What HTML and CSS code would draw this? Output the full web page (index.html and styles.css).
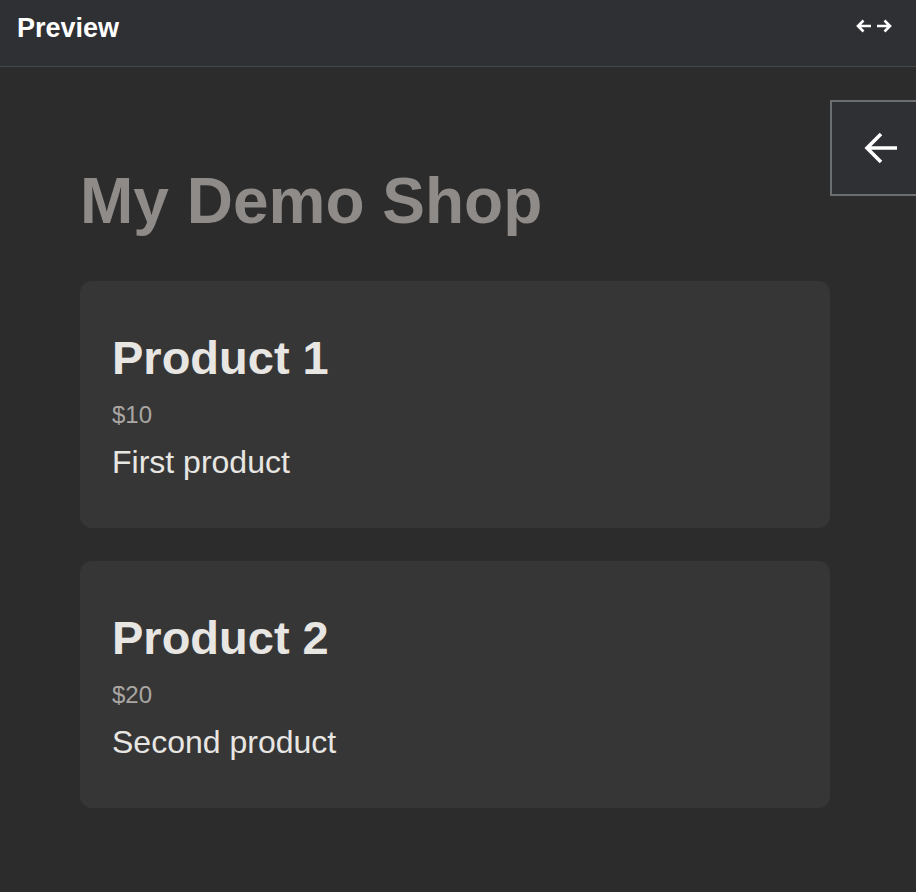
FILE: index.html
```html
<!DOCTYPE html>
<html>
<head>
<meta charset="utf-8">
<link rel="stylesheet" href="styles.css">
</head>
<body>
<header class="topbar">
  <span class="topbar-title">Preview</span>
  <svg class="resize-icon" width="36" height="14" viewBox="0 0 36 14">
    <path d="M2 7H15M7.5 1.5L2 7L7.5 12.5" fill="none" stroke="#fff" stroke-width="2.6"/>
    <path d="M21 7H34M28.5 1.5L34 7L28.5 12.5" fill="none" stroke="#fff" stroke-width="2.6"/>
  </svg>
</header>
<main class="preview">
  <button class="back-btn" aria-label="Back">
    <svg width="34" height="32" viewBox="0 0 34 32">
      <path d="M33 16H3M17 2L3 16L17 30" fill="none" stroke="#fff" stroke-width="3.6"/>
    </svg>
  </button>
  <h1 class="shop-title">My Demo Shop</h1>
  <section class="card">
    <h2 class="card-title">Product 1</h2>
    <p class="price">$10</p>
    <p class="desc">First product</p>
  </section>
  <section class="card">
    <h2 class="card-title">Product 2</h2>
    <p class="price">$20</p>
    <p class="desc">Second product</p>
  </section>
</main>
</body>
</html>
```
FILE: styles.css
```css
html, body {
  margin: 0;
  padding: 0;
  background: #2c2c2c;
  font-family: "Liberation Sans", Arial, sans-serif;
  height: 100%;
  overflow: hidden;
}
.topbar {
  height: 66px;
  box-sizing: content-box;
  background: #2f3033;
  border-bottom: 1px solid #45484b;
  display: flex;
  align-items: flex-start;
  justify-content: space-between;
  padding: 0 24px 0 17px;
}
.topbar-title {
  color: #fff;
  font-weight: bold;
  font-size: 27px;
  line-height: 31px;
  margin-top: 13px;
}
.resize-icon {
  display: block;
  margin-top: 19px;
}
.preview {
  position: relative;
  padding: 96px 86px 0 80px;
}
.back-btn {
  position: absolute;
  top: 33px;
  left: 830px;
  width: 100px;
  height: 96px;
  box-sizing: border-box;
  background: #2f3033;
  border: 2px solid #6c6f71;
  display: flex;
  align-items: center;
  padding: 0 0 0 32px;
  margin: 0;
}
.back-btn svg { display: block; }
.shop-title {
  margin: 0 0 42px 0;
  color: #8f8b89;
  font-size: 64px;
  line-height: 76px;
  font-weight: bold;
}
.card {
  background: #363636;
  border-radius: 12px;
  height: 247px;
  box-sizing: border-box;
  padding: 49px 32px 0 32px;
  margin-bottom: 33px;
}
.card-title {
  margin: 0;
  color: #e8e6e3;
  font-size: 47px;
  line-height: 56px;
  font-weight: bold;
}
.price {
  margin: 15px 0 0 0;
  color: #a9a6a3;
  font-size: 24px;
  line-height: 28px;
}
.desc {
  margin: 14px 0 0 0;
  color: #e8e6e3;
  font-size: 32px;
  line-height: 38px;
}
```
